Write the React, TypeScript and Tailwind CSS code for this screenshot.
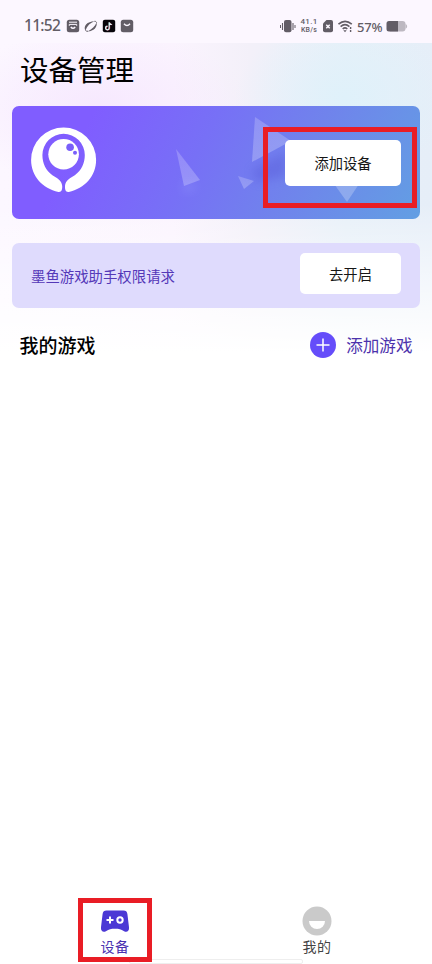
type TabProps = {
  label: string;
  active?: boolean;
  icon: React.ReactNode;
};

function StatusBar() {
  return (
    <div className="flex h-[43px] items-end bg-[#fcf7ff] pb-[8.5px] pl-[24px] pr-[24px] font-['Noto_Sans',sans-serif] text-[#625d66]">
      <span className="mb-[1px] w-[42px] text-[15.5px] font-medium leading-[17px] tracking-[-0.7px]">11:52</span>
      <svg className="h-[18px] w-[68px]" viewBox="0 0 68 18" fill="none">
        <rect x="0.8" y="2.8" width="12.4" height="12.4" rx="2.5" fill="#625d66" />
        <path d="M3 5.2h8" stroke="#fcf7ff" strokeWidth="1" />
        <path d="M3.3 8.8V7.4h7.4v1.4" stroke="#fcf7ff" strokeWidth="1" />
        <path d="M4.8 10q2.2 2.6 4.4 0" stroke="#fcf7ff" strokeWidth="1.4" />
        <path d="M19.4 13.4C17 9.3 21.2 4.3 28.4 4.2c-4 1.5-7.2 4.4-9 9.2Z" fill="#625d66" />
        <path d="M22 14.3c5.5-.1 9.6-4.3 8.6-8.9-1.6 3.8-4.6 6.6-8.6 8.9Z" fill="#625d66" />
        <path d="M28.4 4.3c1.1-.1 2 .4 2.2 1.3M19.4 13.3c.6.8 1.5 1.1 2.8 1" stroke="#625d66" strokeWidth="1" />
        <rect x="36.8" y="2.8" width="12.4" height="12.4" rx="2" fill="#08050b" />
        <path d="M43.6 5.4v5.8a1.8 1.8 0 1 1-1.8-1.8M43.6 5.6q.6 2.1 2.6 2.2" stroke="#ef6583" strokeWidth="1.1" />
        <path d="M43.1 5.2V11a1.8 1.8 0 1 1-1.8-1.8M43.1 5.3q.6 2.1 2.6 2.2" stroke="#d7fafb" strokeWidth="1.2" />
        <rect x="54.8" y="2.8" width="12.4" height="12.4" rx="2.5" fill="#625d66" />
        <path d="M58 6.7q3 3.6 6 0" stroke="#fcf7ff" strokeWidth="1.4" />
      </svg>
      <div className="flex-1" />
      <svg className="mr-[4px] h-[18px] w-[16px]" viewBox="0 0 16 18" fill="none" stroke="#625d66">
        <rect x="4" y="3" width="7.5" height="12.3" rx="2" fill="#625d66" stroke="none" />
        <path d="M2.5 6v7M13 6v7" strokeWidth="1.1" />
        <path d="M.5 8v3M15 8v3" strokeWidth="1" />
      </svg>
      <div className="mb-[1px] flex w-[18px] flex-col items-center font-['Roboto',sans-serif] font-medium">
        <span className="text-[8px] leading-[8px] tracking-[0.3px]">41.1</span>
        <span className="whitespace-nowrap text-[7px] leading-[8px] tracking-[0.2px]">KB/s</span>
      </div>
      <svg className="ml-[5px] h-[18px] w-[11px]" viewBox="0 0 11 18">
        <path d="M3.5 3H8a2 2 0 0 1 2 2v8.3a2 2 0 0 1-2 2H2a2 2 0 0 1-2-2V6.5Z" fill="#625d66" />
        <path d="m3.3 7.8 3.4 3.4m0-3.4-3.4 3.4" stroke="#fcf7ff" strokeWidth="1.5" />
      </svg>
      <svg className="ml-[4px] h-[18px] w-[16px]" viewBox="0 0 16 18" fill="none" stroke="#625d66" strokeWidth="1.6">
        <path d="M.5 7.2Q7 1.4 13.8 7.2M2.6 9.6q4.4-3.8 8.8 0M4.7 12q2.3-2.2 4.6 0" />
        <path d="M5.3 13.2h3.4L7 15.3Z" fill="#625d66" stroke="none" />
        <path d="M12.6 10v2M12.6 13v2" strokeWidth="1.4" />
      </svg>
      <span className="ml-[3px] w-[29px] whitespace-nowrap text-[13px] font-medium leading-[15px] tracking-[-0.2px]">57%</span>
      <svg className="h-[18px] w-[22px]" viewBox="0 0 22 18">
        <path d="M4 4h12.5a3 3 0 0 1 3 3v4.5a3 3 0 0 1-3 3H4Z" fill="#bdb8c1" />
        <path d="M19.5 7c2.2 1 2.2 3.7 0 4.7Z" fill="#bdb8c1" />
        <path d="M3 4h9v10.5H3a2.5 2.5 0 0 1-2.5-2.5V6.5A2.5 2.5 0 0 1 3 4Z" fill="#625d66" />
      </svg>
    </div>
  );
}

function BannerArt() {
  return (
    <svg className="absolute inset-0 h-full w-full" viewBox="0 0 408 113">
      <defs>
        <linearGradient id="shard" x1="0" y1="0" x2="0" y2="1">
          <stop offset="0" stopColor="#fff" stopOpacity="0.2" />
          <stop offset="1" stopColor="#fff" stopOpacity="0.24" />
        </linearGradient>
        <filter id="soft" x="-50%" y="-50%" width="200%" height="200%">
          <feGaussianBlur stdDeviation="5" />
        </filter>
      </defs>
      <path d="M240 64 274 46v24l-30 6Z" fill="#5659d8" opacity="0.4" filter="url(#soft)" />
      <path d="M170 76 185 78l-4 8h-10Z" fill="#a6b3ff" opacity="0.2" filter="url(#soft)" />
      <path d="m164 43 24 31-16 6Z" fill="url(#shard)" />
      <path d="m243 11 36 24-39 21Z" fill="url(#shard)" />
      <path d="m226 70 16 5-10 8Z" fill="url(#shard)" />
      <path d="M320 75h29l-14 21Z" fill="#fff" opacity="0.24" />
    </svg>
  );
}

function SquidLogo() {
  return (
    <svg className="relative h-[66px] w-[66px]" viewBox="0 0 66 66">
      <path
        d="M27.5 64.9C11.5 61.5.1 49 .1 33a32.5 32.5 0 0 1 65 0c0 16-11.4 28.5-27.4 31.9-3 .4-3.9-2.4-3.7-5.9.3-6.2 5.6-7.8 9.8-10.8 6.6-4.6 10-12 10-20.2a21.2 21.2 0 0 0-42.4 0c0 8.2 3.4 15.6 10 20.2 4.2 3 9.5 4.6 9.8 10.8.2 3.5-.7 6.3-3.7 5.9Z"
        fill="white"
      />
      <circle cx="32.6" cy="27.2" r="15.3" fill="white" />
      <circle cx="39.1" cy="20.2" r="3.8" fill="#795ffa" />
      <circle cx="44" cy="25.8" r="2" fill="#795ffa" />
    </svg>
  );
}

function Tab({ label, active, icon }: TabProps) {
  return (
    <div className="flex flex-col items-center">
      <div className="flex h-[30px] w-[30px] items-center justify-center">{icon}</div>
      <span className={`text-[14px] leading-[20px] tracking-[0.4px] ${active ? "text-[#4931b0]" : "text-[#444]"}`}>
        {label}
      </span>
    </div>
  );
}

export default function App() {
  return (
    <div className="relative flex h-[964px] w-[432px] flex-col overflow-hidden bg-white font-['Noto_Sans_CJK_SC',sans-serif] text-black">
      <StatusBar />

      <main className="flex-1 bg-[linear-gradient(to_bottom,transparent_0px,transparent_160px,rgba(255,255,255,0.5)_230px,white_310px),radial-gradient(150px_80px_at_100px_65px,#f6e8fe,transparent),radial-gradient(110px_80px_at_345px_55px,#dff1fa,transparent),linear-gradient(to_right,#fcf7ff_0%,#fbf4fe_40%,#f3f0f9_58%,#e7f0f8_80%,#e6eef8_100%)] px-[12px]">
        <h1 className="pl-[8px] pt-[6px] text-[28.5px] font-normal leading-[40px]">设备管理</h1>

        {/* Device banner */}
        <section className="relative mt-[17px] flex h-[113px] items-center justify-between overflow-hidden rounded-[7px] bg-[linear-gradient(118deg,#805dff_0%,#805dff_18%,#7770f6_45%,#7083ec_68%,#629fe3_100%)] pl-[19px] pr-[19px]">
          <BannerArt />
          <div className="-mt-[6px]">
            <SquidLogo />
          </div>
          <button className="relative h-[46px] w-[116px] rounded-[5px] bg-white text-[14.3px] leading-[20px] text-[#161616]">
            添加设备
          </button>
        </section>

        {/* Permission request */}
        <section className="mt-[24px] flex h-[65px] items-center justify-between rounded-[7px] bg-[#dfdbfd] pl-[19px] pr-[19px]">
          <span className="text-[14.4px] text-[#5438b8]">墨鱼游戏助手权限请求</span>
          <button className="-mt-[4px] h-[41px] w-[101px] rounded-[5px] bg-white text-[14.3px] leading-[20px] text-[#161616]">
            去开启
          </button>
        </section>

        <div className="mt-[22px] flex h-[30px] items-center justify-between pl-[7.5px] pr-[7.5px]">
          <h2 className="text-[19px] font-medium leading-[28px]">我的游戏</h2>
          <button className="flex items-center gap-[10px] text-[16.6px] leading-[26px] text-[#4c32ac]">
            <svg className="h-[26px] w-[26px]" viewBox="0 0 26 26">
              <circle cx="13" cy="13" r="13" fill="#654dfa" />
              <path d="M13 6.5v13M6.5 13h13" stroke="white" strokeWidth="1.5" />
            </svg>
            添加游戏
          </button>
        </div>
      </main>

      {/* Bottom navigation */}
      <nav className="flex h-[58px] justify-between pl-[100px] pr-[100px]">
        <Tab
          label="设备"
          active
          icon={
            <svg className="h-[24px] w-[30px]" viewBox="0 0 30 24">
              <path
                d="M6.5 1.5h17c2.3 0 3.6 1.2 3.9 3.4l1.6 13.4c.5 4-2.3 5.3-4.9 3.9-3.2-1.9-5-2.4-9.1-2.4s-5.9.5-9.1 2.4c-2.6 1.4-5.4.1-4.9-3.9L2.6 4.9c.3-2.2 1.6-3.4 3.9-3.4Z"
                fill="#4b38d5"
              />
              <path d="M10 7.5v7M6.5 11h7" stroke="white" strokeWidth="2" />
              <circle cx="20" cy="11" r="2.7" fill="none" stroke="white" strokeWidth="2" />
            </svg>
          }
        />
        <Tab
          label="我的"
          icon={
            <svg className="h-[30px] w-[30px]" viewBox="0 0 30 30">
              <circle cx="15" cy="15" r="14.5" fill="#cacaca" />
              <path d="M7 15h16a8 8 0 0 1-16 0Z" fill="white" />
            </svg>
          }
        />
      </nav>

      {/* Home indicator */}
      <div className="absolute bottom-0 left-[129px] h-[5px] w-[174px] rounded-[2px] border border-[#eeeeee] bg-white" />

      {/* Callouts */}
      <div className="absolute left-[263px] top-[127px] h-[81px] w-[154px] border-[5px] border-[#e91d25]" />
      <div className="absolute left-[78px] top-[898px] h-[64px] w-[74px] border-[5px] border-[#e91d25]" />
    </div>
  );
}
